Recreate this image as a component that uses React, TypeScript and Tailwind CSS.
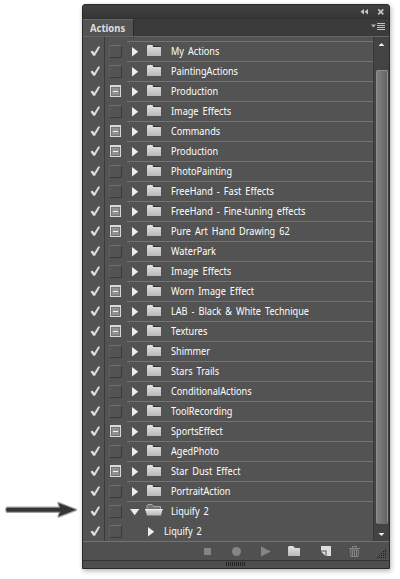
import React from "react";

type Row = { name: string; dialog?: boolean; open?: boolean; child?: boolean };

const rows: Row[] = [
  { name: "My Actions" },
  { name: "PaintingActions" },
  { name: "Production", dialog: true },
  { name: "Image Effects" },
  { name: "Commands", dialog: true },
  { name: "Production", dialog: true },
  { name: "PhotoPainting" },
  { name: "FreeHand - Fast Effects" },
  { name: "FreeHand - Fine-tuning effects", dialog: true },
  { name: "Pure Art Hand Drawing 62", dialog: true },
  { name: "WaterPark" },
  { name: "Image Effects" },
  { name: "Worn Image Effect", dialog: true },
  { name: "LAB - Black & White Technique", dialog: true },
  { name: "Textures", dialog: true },
  { name: "Shimmer" },
  { name: "Stars Trails" },
  { name: "ConditionalActions" },
  { name: "ToolRecording" },
  { name: "SportsEffect", dialog: true },
  { name: "AgedPhoto" },
  { name: "Star Dust Effect", dialog: true },
  { name: "PortraitAction" },
  { name: "Liquify 2", open: true },
  { name: "Liquify 2", child: true },
];

function Check() {
  return (
    <svg className="ml-[7px] mt-[5px] h-3 w-3 shrink-0" viewBox="0 0 12 12">
      <path d="M.5 5.8L2.4 4.6L4.3 6.8L8.2 .5L10.2 .8L5 9.8L3.3 9.8Z" fill="#dedede" />
    </svg>
  );
}

function DialogBox({ on }: { on?: boolean }) {
  return on ? (
    <svg className="h-[13px] w-[13px]" viewBox="0 0 13 13">
      <rect x="1" y="0" width="11" height="12" fill="#d8d8d8" />
      <rect x="2" y="2" width="9" height="9" fill="#747474" />
      <rect x="3" y="3" width="7" height="7" fill="#8f8f8f" />
      <rect x="4" y="6" width="5" height="1" fill="#f4f4f4" />
    </svg>
  ) : (
    <div className="h-[13px] w-[13px] border border-b-[#3a3a3a] border-l-[#5f5f5f] border-r-[#3a3a3a] border-t-[#6f6f6f]" />
  );
}

function Folder({ open }: { open?: boolean }) {
  return open ? (
    <svg className="h-[13px] w-[18px]" viewBox="0 0 18 13">
      <path d="M2 6V1.5L3 .5H7L8.5 2.5H15.5V6" fill="#737373" stroke="#a9a9a9" />
      <path d="M0 5H17.7L16 11.5H2Z" fill="url(#folderFill)" />
      <path d="M0 5.5H17.5" stroke="#eeeeee" />
    </svg>
  ) : (
    <svg className="h-3 w-[15px]" viewBox="0 0 15 12">
      <path d="M0 11V1L1 0H5.2L6.6 2H14V11Z" fill="url(#folderFill)" />
      <path d="M6 1.5H14" stroke="#363636" />
    </svg>
  );
}

function ActionRow({ row }: { row: Row }) {
  return (
    <div className="flex h-5">
      <div className="w-[22px] shrink-0 border-r border-[#3a3a3a]">
        <Check />
      </div>
      <div className="w-[22px] shrink-0 pl-1 pt-1">
        <DialogBox on={row.dialog} />
      </div>
      <div className={"flex w-[246px] border-t " + (row.child ? "border-transparent" : "border-[#737373]")}>
        <div className={row.child ? "w-[37px] pl-5 pt-1" : "w-[19px] pl-1 pt-1"}>
          <svg className="h-3 w-[11px] overflow-visible" viewBox="0 0 11 12">
            {row.open ? <path d="M-1 3H8.4L3.7 9.2Z" fill="#ededed" /> : <path d="M1 1L7.2 5.7L1 10.4Z" fill="#ededed" />}
          </svg>
        </div>
        {!row.child && (
          <div className={row.open ? "-ml-px mr-px w-[25px] pt-[2px]" : "w-[25px] pl-px pt-[3px]"}>
            <Folder open={row.open} />
          </div>
        )}
        <span className="origin-left scale-x-[0.83] whitespace-nowrap text-[11px] leading-[17px] text-white [word-spacing:2px]">
          {row.name}
        </span>
      </div>
    </div>
  );
}

const gripDots = [4, 3, 2, 1, 0].flatMap((count, r) =>
  Array.from({ length: r + 1 }, (_, i) => ({ x: 294 + (count + i) * 2, y: 7 + r * 2 })),
);

export default function App() {
  return (
    <div className="relative h-[579px] w-[400px] overflow-hidden bg-white pl-[82px] pt-1 font-['Noto_Sans','Open_Sans',sans-serif]">
      <svg className="absolute h-0 w-0">
        <defs>
          <linearGradient id="folderFill" x1="0" y1="0" x2="0" y2="1">
            <stop offset="0" stopColor="#e2e2e2" />
            <stop offset="1" stopColor="#b9b9b9" />
          </linearGradient>
        </defs>
      </svg>

      <svg className="absolute left-0 top-[498px] h-6 w-20" viewBox="0 0 80 24">
        <path
          d="M7 9.8H60L58.5 5L76 11.8L58.5 18.6L60 13.8H7Q5.5 11.8 7 9.8Z"
          fill="#353535"
          stroke="#a4a4a4"
          strokeWidth="2.4"
          strokeLinejoin="round"
        />
        <path d="M7 9.8H60L58.5 5L76 11.8L58.5 18.6L60 13.8H7Q5.5 11.8 7 9.8Z" fill="#353535" />
      </svg>

      <div className="flex h-[565px] w-[308px] flex-col overflow-hidden rounded-t-[3px] border border-[#292929] bg-[#535353] shadow-[1px_2px_5px_rgba(0,0,0,0.3)]">
        <div className="flex h-[13px] shrink-0 justify-end bg-gradient-to-b from-[#414141] to-[#363636]">
          <svg className="h-[13px] w-10" viewBox="0 0 40 13">
            <path d="M15 4V9.5L11.5 6.75ZM19 4V9.5L15.5 6.75Z" fill="#c5c5c5" />
            <path d="M29.3 4.3L34.3 9.3M34.3 4.3L29.3 9.3" stroke="#c5c5c5" strokeWidth="1.7" />
          </svg>
        </div>

        <div className="flex h-[18px] shrink-0 justify-between border-t border-[#303030] bg-[#3b3b3b]">
          <div className="h-[19px] w-[51px] border-r border-t border-r-[#292929] border-t-[#686868] bg-[#535353] pl-[7px] text-[11px] font-bold leading-[16px] text-[#dedede]">
            <span className="inline-block origin-left scale-x-[0.86]">Actions</span>
          </div>
          <svg className="h-[17px] w-5" viewBox="0 0 20 17">
            <path d="M2 5.5H7L4.5 8.5Z" fill="#b5b5b5" />
            <path d="M8 4.5H16M8 6.5H16M8 8.5H16M8 10.5H16" stroke="#c0c0c0" />
          </svg>
        </div>

        <div className="flex h-[505px] shrink-0 border-t border-[#666666]">
          <div className="w-[290px]">
            <div className="h-1 w-[22px] border-r border-[#3a3a3a]" />
            {rows.map((row, i) => (
              <ActionRow key={i} row={row} />
            ))}
          </div>
          <div className="flex w-4 flex-col items-center border-l border-[#383838] bg-[#434343]">
            <svg className="h-8 w-[14px] shrink-0" viewBox="0 0 14 32">
              <path d="M3.5 9L6.5 6L9.5 9Z" fill="#eeeeee" />
            </svg>
            <div className="mt-px h-[454px] w-3 shrink-0 rounded-[2px] border border-[#8d8d8d] border-b-[#717171] bg-gradient-to-r from-[#818181] to-[#646464]" />
            <svg className="h-[17px] w-[14px]" viewBox="0 0 14 17">
              <path d="M3.5 9H9.5L6.5 12Z" fill="#eeeeee" />
            </svg>
          </div>
        </div>

        <div className="h-[19px] shrink-0 border-t border-[#737373] bg-[#505050]">
          <svg className="h-[18px] w-[306px]" viewBox="0 0 306 18">
            <rect x="121" y="6" width="7" height="7" fill="#858585" />
            <circle cx="153.5" cy="9.5" r="4.5" fill="#858585" />
            <path d="M178 4.5V14.5L188 9.5Z" fill="#858585" />
            <path d="M205 14V5L206 4H210L212 6H217V14Z" fill="url(#folderFill)" />
            <path d="M238 4H248V14H243.5V8.5H238Z" fill="#dddddd" />
            <path d="M238 9.5H242.5V14Z" fill="#dddddd" />
            <path
              d="M266 6.5H277M269.5 6V4.5H273.5V6M267.5 8H275.5L275 14.5H268ZM269.5 8V14M271.5 8V14M273.5 8V14"
              fill="none"
              stroke="#858585"
            />
            {gripDots.map((dot, i) => (
              <rect key={i} x={dot.x} y={dot.y} width="1" height="1" fill="#1c1c1c" />
            ))}
          </svg>
        </div>
        <div className="flex flex-1 justify-center border-t border-[#333333] bg-[#4d4d4d]">
          <svg className="mt-px h-1 w-5" viewBox="0 0 20 4">
            <path d="M0 2H20" stroke="#262626" strokeWidth="4" strokeDasharray="1 1" />
          </svg>
        </div>
      </div>
    </div>
  );
}
